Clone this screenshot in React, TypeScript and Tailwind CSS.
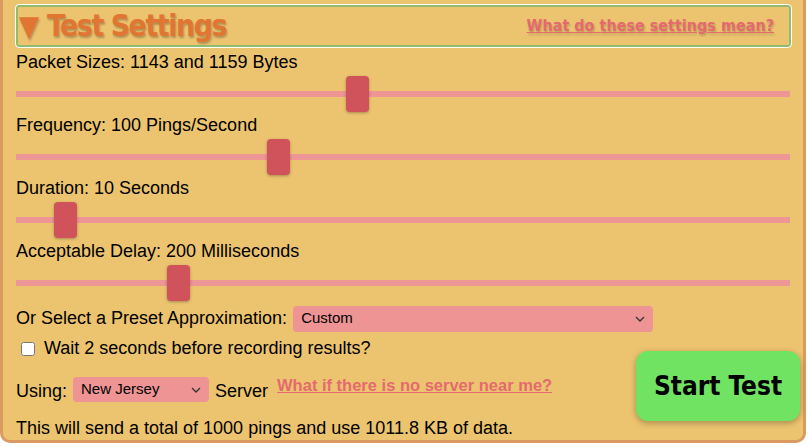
import React, { useState } from 'react';

const sliders = [
  { label: 'Packet Sizes: 1143 and 1159 Bytes', pos: 330 },
  { label: 'Frequency: 100 Pings/Second', pos: 251 },
  { label: 'Duration: 10 Seconds', pos: 38 },
  { label: 'Acceptable Delay: 200 Milliseconds', pos: 151 },
];

const heading = { fontFamily: '"DejaVu Sans", sans-serif', fontStretch: 'condensed' };
const body = { fontFamily: '"Liberation Sans", Arial, sans-serif' };

const Chevron = () => (
  <svg width="10" height="6" viewBox="0 0 10 6" className="pointer-events-none absolute right-2 top-1/2 -translate-y-1/2">
    <path d="M1 1l4 4 4-4" fill="none" stroke="#333" strokeWidth="1.3" />
  </svg>
);

const Slider: React.FC<{ label: string; pos: number }> = ({ label, pos }) => (
  <div>
    <p className="text-[18px] leading-5 text-black">{label}</p>
    <div className="relative mt-[3px] h-[40px]">
      <div className="absolute left-0 right-[10px] top-[16px] h-[6px] bg-[#ee9595]" />
      <div className="absolute top-[1px] h-[36px] w-[23px] rounded-[4px] bg-[#d0525a] shadow-[0_1px_3px_rgba(0,0,0,0.3)]" style={{ left: pos }} />
    </div>
  </div>
);

export default function App() {
  const [wait, setWait] = useState(false);
  return (
    <div className="h-[446px] w-[808px] overflow-hidden bg-white" style={body}>
      <div className="h-[443px] w-[806px] rounded-b-[10px] border-x-[3px] border-b-[3px] border-[#dc9a63] bg-[#ecc46f] pl-[13px] pr-[3px] pt-[5px]">
        <div className="mr-[9px] flex h-[42px] items-center justify-between rounded-[3px] border-2 border-[#8fbd6c] pl-[1px] pr-[15px] outline outline-1 outline-white">
          <div className="flex items-center gap-[8px] text-[#e07632] [text-shadow:1px_2px_2px_rgba(0,0,0,0.25)]" style={heading}>
            <span className="text-[29px] leading-none">▼</span>
            <span className="text-[30px] font-bold leading-none tracking-[-1.5px]">Test Settings</span>
          </div>
          <a href="#" className="text-[16px] font-bold text-[#e56a6f] underline [text-shadow:1px_2px_2px_rgba(0,0,0,0.2)]" style={heading}>
            What do these settings mean?
          </a>
        </div>
        <div className="mt-[5px]">
          {sliders.map(s => <Slider key={s.label} {...s} />)}
          <div className="mt-[1px] flex items-center gap-[6px]">
            <span className="text-[18px] text-black">Or Select a Preset Approximation:</span>
            <div className="relative">
              <select className="h-[26px] w-[360px] appearance-none rounded-[4px] bg-[#ee9494] pl-[8px] text-[15px] text-black outline-none">
                <option>Custom</option>
              </select>
              <Chevron />
            </div>
          </div>
          <div className="flex">
            <div className="flex-1">
              <label className="mt-[3px] flex items-center gap-[9px] pl-[5px] text-[18px] text-black">
                <input type="checkbox" checked={wait} onChange={e => setWait(e.target.checked)} className="h-[14px] w-[14px]" />
                Wait 2 seconds before recording results?
              </label>
              <div className="mt-[15px] flex items-start gap-[6px]">
                <span className="pt-[1px] text-[18px] text-black">Using:</span>
                <div className="relative">
                  <select className="h-[25px] w-[136px] appearance-none rounded-[4px] bg-[#ee9494] pl-[8px] text-[15px] text-black outline-none">
                    <option>New Jersey</option>
                  </select>
                  <Chevron />
                </div>
                <span className="pt-[1px] text-[18px] text-black">Server</span>
                <a href="#" className="ml-[3px] -mt-[4px] text-[16.5px] font-bold text-[#e56a6f] underline">What if there is no server near me?</a>
              </div>
              <p className="mt-[10px] text-[18px] text-black">This will send a total of 1000 pings and use 1011.8 KB of data.</p>
            </div>
            <button className="mt-[19px] h-[70px] w-[164px] rounded-[12px] bg-[#70e462] text-[26px] font-bold text-black shadow-[0_2px_6px_rgba(0,0,0,0.3)]" style={heading}>
              Start Test
            </button>
          </div>
        </div>
      </div>
    </div>
  );
}
